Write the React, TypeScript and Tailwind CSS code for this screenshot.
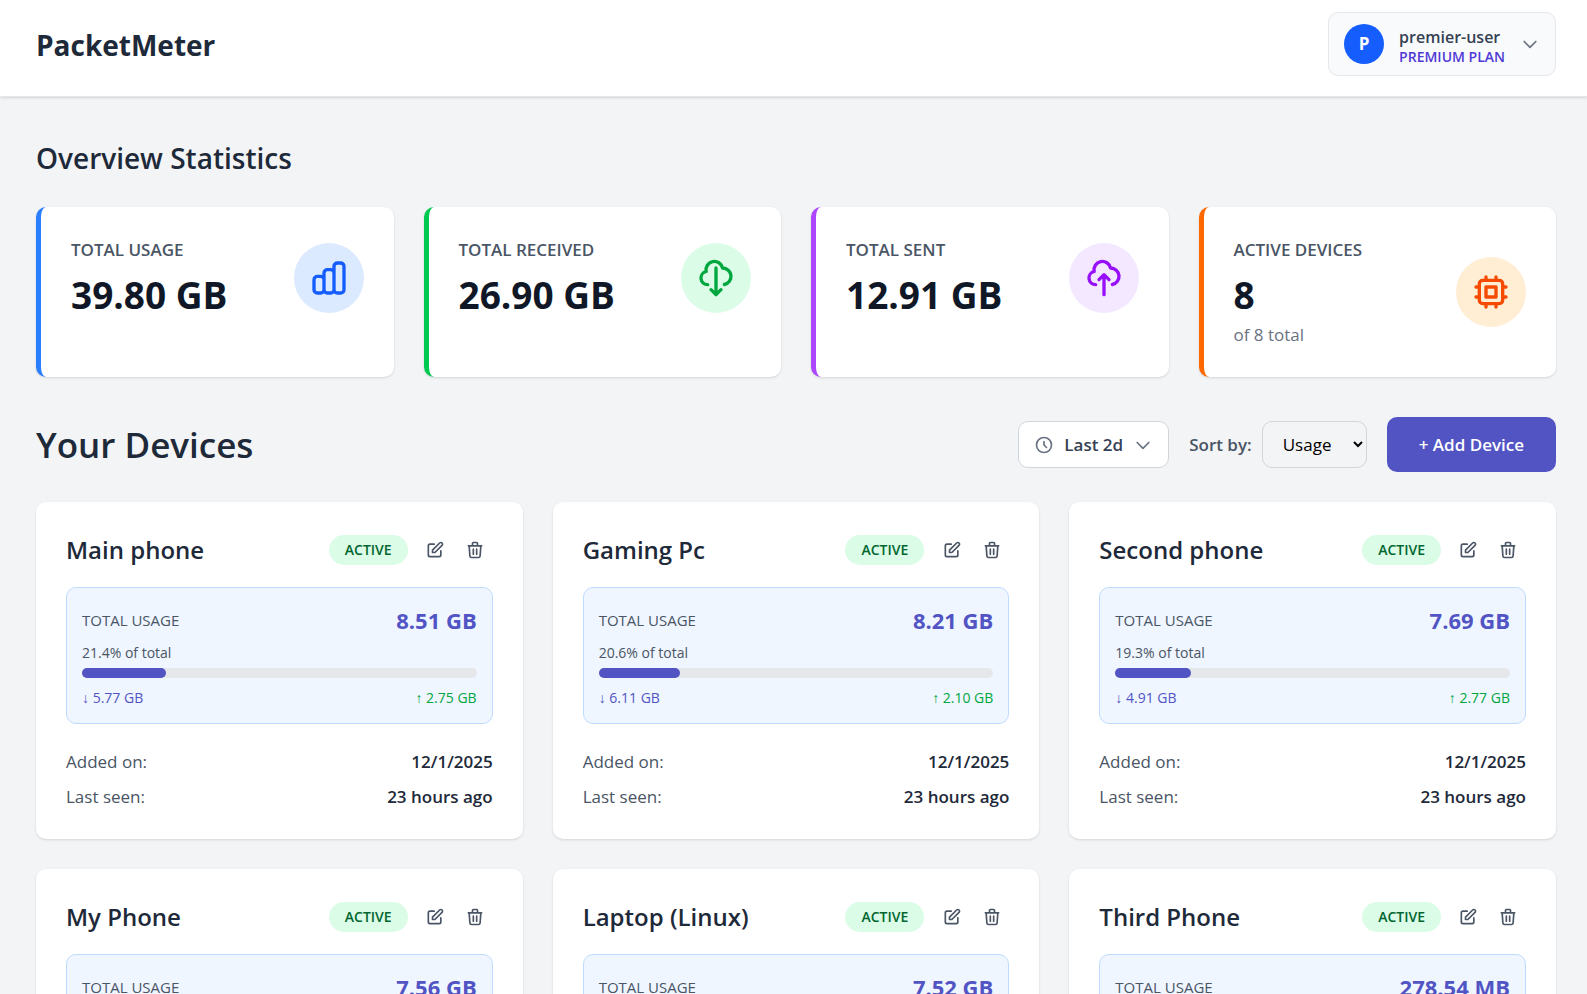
import React from "react";

const icons = {
  chart:
    "M9 19v-6a2 2 0 00-2-2H5a2 2 0 00-2 2v6a2 2 0 002 2h2a2 2 0 002-2zm0 0V9a2 2 0 012-2h2a2 2 0 012 2v10m-6 0a2 2 0 002 2h2a2 2 0 002-2m0 0V5a2 2 0 012-2h2a2 2 0 012 2v14a2 2 0 01-2 2h-2a2 2 0 01-2-2z",
  download: "M7 16a4 4 0 01-.88-7.903A5 5 0 1115.9 6L16 6a5 5 0 011 9.9M9 19l3 3m0 0l3-3m-3 3V6",
  upload: "M7 16a4 4 0 01-.88-7.903A5 5 0 1115.9 6L16 6a5 5 0 011 9.9M15 13l-3-3m0 0l-3 3m3-3v12",
  chip: "M9 3v2m6-2v2M9 19v2m6-2v2M5 9H3m2 6H3m18-6h-2m2 6h-2M7 19h10a2 2 0 002-2V7a2 2 0 00-2-2H7a2 2 0 00-2 2v10a2 2 0 002 2zM9 9h6v6H9V9z",
  clock: "M12 8v4l3 3m6-3a9 9 0 11-18 0 9 9 0 0118 0z",
  chevron: "M19 9l-7 7-7-7",
  edit: "M11 5H6a2 2 0 00-2 2v11a2 2 0 002 2h11a2 2 0 002-2v-5m-1.414-9.414a2 2 0 112.828 2.828L11.828 15H9v-2.828l8.586-8.586z",
  trash:
    "M19 7l-.867 12.142A2 2 0 0116.138 21H7.862a2 2 0 01-1.995-1.858L5 7m5 4v6m4-6v6m1-10V4a1 1 0 00-1-1h-4a1 1 0 00-1 1v3M4 7h16",
};

function Icon({ name, className }: { name: keyof typeof icons; className: string }) {
  return (
    <svg
      className={className}
      viewBox="0 0 24 24"
      fill="none"
      stroke="currentColor"
      strokeWidth={2}
      strokeLinecap="round"
      strokeLinejoin="round"
      aria-hidden="true"
    >
      <path d={icons[name]} />
    </svg>
  );
}

type Stat = {
  label: string;
  value: string;
  note?: string;
  icon: keyof typeof icons;
  border: string;
  badge: string;
};

const stats: Stat[] = [
  { label: "TOTAL USAGE", value: "39.80 GB", icon: "chart", border: "border-blue-500", badge: "bg-blue-100 text-blue-600" },
  { label: "TOTAL RECEIVED", value: "26.90 GB", icon: "download", border: "border-green-500", badge: "bg-green-100 text-green-600" },
  { label: "TOTAL SENT", value: "12.91 GB", icon: "upload", border: "border-purple-500", badge: "bg-purple-100 text-purple-600" },
  { label: "ACTIVE DEVICES", value: "8", note: "of 8 total", icon: "chip", border: "border-orange-500", badge: "bg-orange-100 text-orange-600" },
];

type Device = { name: string; total: string; percent: number; down: string; up: string };

const devices: Device[] = [
  { name: "Main phone", total: "8.51 GB", percent: 21.4, down: "5.77 GB", up: "2.75 GB" },
  { name: "Gaming Pc", total: "8.21 GB", percent: 20.6, down: "6.11 GB", up: "2.10 GB" },
  { name: "Second phone", total: "7.69 GB", percent: 19.3, down: "4.91 GB", up: "2.77 GB" },
  { name: "My Phone", total: "7.56 GB", percent: 19.0, down: "5.02 GB", up: "2.54 GB" },
  { name: "Laptop (Linux)", total: "7.52 GB", percent: 18.9, down: "4.81 GB", up: "2.71 GB" },
  { name: "Third Phone", total: "278.54 MB", percent: 0.7, down: "241.10 MB", up: "37.44 MB" },
];

function StatCard({ stat }: { stat: Stat }) {
  return (
    <div className={`rounded-[10px] border-l-[5px] bg-white p-[30px] shadow-sm ${stat.border}`}>
      <div className="flex items-center justify-between">
        <div>
          <p className="text-[17px] leading-[25px] font-semibold text-gray-600">{stat.label}</p>
          <p className="mt-[10px] text-[37px] leading-[46px] font-bold text-gray-900">{stat.value}</p>
          {stat.note && <p className="mt-1 text-[17px] leading-[25px] text-gray-500">{stat.note}</p>}
        </div>
        <div className={`flex size-[70px] items-center justify-center rounded-full ${stat.badge}`}>
          <Icon name={stat.icon} className="size-10" />
        </div>
      </div>
    </div>
  );
}

function DeviceCard({ device }: { device: Device }) {
  return (
    <article className="rounded-[10px] bg-white p-[30px] shadow-sm">
      <div className="flex h-[35px] items-center justify-between">
        <h3 className="text-[24px] leading-[35px] font-semibold text-gray-800">{device.name}</h3>
        <div className="flex items-center">
          <span className="mr-[10px] flex h-[30px] items-center rounded-full bg-green-100 px-4 text-[14px] font-semibold text-green-800">
            ACTIVE
          </span>
          <button
            type="button"
            aria-label={`Edit ${device.name}`}
            className="mr-[5px] flex size-[35px] items-center justify-center text-gray-600"
          >
            <Icon name="edit" className="size-5" />
          </button>
          <button
            type="button"
            aria-label={`Delete ${device.name}`}
            className="flex size-[35px] items-center justify-center text-gray-600"
          >
            <Icon name="trash" className="size-5" />
          </button>
        </div>
      </div>

      <div className="mt-5 rounded-[10px] border border-blue-200 bg-blue-50 p-[15px]">
        <div className="flex items-center justify-between">
          <span className="text-[15px] leading-[35px] text-gray-600">TOTAL USAGE</span>
          <span className="text-[22px] leading-[35px] font-bold text-[#5254c4]">{device.total}</span>
        </div>
        <p className="mt-[5px] text-[14px] leading-5 text-gray-600">{device.percent.toFixed(1)}% of total</p>
        <div className="mt-[5px] h-[10px] rounded-full bg-gray-200">
          <div className="h-[10px] rounded-full bg-[#5254c4]" style={{ width: `${device.percent}%` }} />
        </div>
        <div className="mt-[10px] flex justify-between text-[14px] leading-5">
          <span className="text-[#5254c4]">↓ {device.down}</span>
          <span className="text-green-600">↑ {device.up}</span>
        </div>
      </div>

      <dl className="mt-[25px] flex flex-col gap-[10px] text-[17px] leading-[25px]">
        <div className="flex justify-between">
          <dt className="text-gray-600">Added on:</dt>
          <dd className="font-semibold text-gray-800">12/1/2025</dd>
        </div>
        <div className="flex justify-between">
          <dt className="text-gray-600">Last seen:</dt>
          <dd className="font-semibold text-gray-800">23 hours ago</dd>
        </div>
      </dl>
    </article>
  );
}

export default function App() {
  return (
    <div className="min-h-screen bg-gray-100 pb-[30px] font-['Open_Sans','Noto_Sans',sans-serif]">
      <header className="flex items-start justify-between border-b border-gray-200 bg-white pt-3 pr-[31px] pb-5 pl-9 shadow-sm">
        <h1 className="mt-[13px] text-[28px] leading-10 font-bold text-gray-800">PacketMeter</h1>
        <button
          type="button"
          className="flex items-center rounded-[10px] border border-gray-200 bg-gray-50 px-[15px] py-2 text-left"
        >
          <span className="flex size-10 items-center justify-center rounded-full bg-blue-600 text-[17px] font-bold text-white">
            P
          </span>
          <span className="ml-[15px] flex flex-col pt-[5px] pb-[1px]">
            <span className="text-[16px] leading-[22px] font-semibold text-gray-700">premier-user</span>
            <span className="text-[14px] leading-[18px] font-semibold text-[#4f39d6]">PREMIUM PLAN</span>
          </span>
          <Icon name="chevron" className="ml-[15px] size-5 text-gray-500" />
        </button>
      </header>

      <main className="pt-10 pr-[31px] pl-9">
        <section>
          <h2 className="text-[28px] leading-[42px] font-semibold text-gray-800">Overview Statistics</h2>
          <div className="mt-7 grid grid-cols-4 gap-[30px]">
            {stats.map((stat) => (
              <StatCard key={stat.label} stat={stat} />
            ))}
          </div>
        </section>

        <section className="mt-10">
          <div className="flex items-center justify-between">
            <h2 className="text-[35px] leading-[50px] font-semibold text-gray-800">Your Devices</h2>
            <div className="flex items-center">
              <button
                type="button"
                className="flex h-[47px] items-center rounded-[10px] border border-gray-300 bg-white px-[15px] text-[17px] font-semibold text-gray-700"
              >
                <Icon name="clock" className="mr-[10px] size-5 text-gray-500" />
                Last 2d
                <Icon name="chevron" className="ml-[10px] size-5 text-gray-500" />
              </button>
              <label htmlFor="sort" className="mr-[10px] ml-5 text-[17px] font-semibold text-gray-600">
                Sort by:
              </label>
              <select
                id="sort"
                defaultValue="Usage"
                className="h-[47px] w-[105px] rounded-[10px] border border-gray-300 pl-4 text-[17px] text-black"
              >
                <option>Usage</option>
                <option>Name</option>
              </select>
              <button
                type="button"
                className="ml-5 h-[55px] rounded-[10px] bg-[#5254c4] px-8 text-[17px] font-semibold text-white"
              >
                + Add Device
              </button>
            </div>
          </div>

          <div className="mt-[30px] grid grid-cols-3 gap-[30px]">
            {devices.map((device) => (
              <DeviceCard key={device.name} device={device} />
            ))}
          </div>
        </section>
      </main>
    </div>
  );
}
